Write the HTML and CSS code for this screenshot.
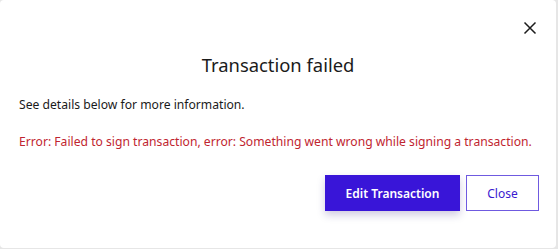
FILE: index.html
```html
<!DOCTYPE html>
<html>
<head>
<meta charset="utf-8">
<link rel="stylesheet" href="styles.css">
</head>
<body>
<div class="modal">
  <div class="top">
    <button class="close-x" aria-label="Close">
      <svg width="14" height="14" viewBox="0 0 14 14"><path d="M1.5 1.5 L12.5 12.5 M12.5 1.5 L1.5 12.5" stroke="#1c1c1c" stroke-width="1.5" fill="none"/></svg>
    </button>
  </div>
  <h1 class="title">Transaction failed</h1>
  <p class="info">See details below for more information.</p>
  <p class="error">Error: Failed to sign transaction, error: Something went wrong while signing a transaction.</p>
  <div class="actions">
    <button class="btn primary">Edit Transaction</button>
    <button class="btn secondary">Close</button>
  </div>
</div>
</body>
</html>
```
FILE: styles.css
```css
html, body {
  margin: 0;
  padding: 0;
  background: #e6e6e6;
}
body {
  font-family: "Noto Sans", "Open Sans", sans-serif;
  width: 558px;
  height: 249px;
}
.modal {
  width: 556px;
  height: 248px;
  background: #fff;
  border-radius: 4px;
  display: flex;
  flex-direction: column;
  box-sizing: border-box;
}
.top {
  display: flex;
  justify-content: flex-end;
  padding: 21px 19px 0 0;
  height: 14px;
}
.close-x {
  border: 0;
  background: none;
  padding: 0;
  width: 14px;
  height: 14px;
  display: block;
}
.close-x svg { display: block; }
.title {
  margin: 17px 0 0 0;
  text-align: center;
  font-size: 18.4px;
  font-weight: 400;
  line-height: 26px;
  color: #1b1b1b;
}
.info {
  margin: 18px 0 0 19px;
  font-size: 12.15px;
  line-height: 18px;
  color: #1a1a1a;
}
.error {
  margin: 19px 0 0 19px;
  font-size: 12.15px;
  line-height: 18px;
  color: #bf2530;
}
.actions {
  display: flex;
  justify-content: flex-end;
  gap: 6px;
  padding: 24px 17px 0 0;
}
.btn {
  height: 36px;
  font-family: inherit;
  font-size: 12px;
  box-sizing: border-box;
  cursor: pointer;
  padding: 0;
}
.primary {
  width: 135px;
  background: #3915d8;
  color: #fff;
  border: 0;
  font-weight: 600;
  box-shadow: 0 4px 8px rgba(40, 20, 120, 0.22);
}
.secondary {
  width: 73px;
  background: #fff;
  color: #3a1ad0;
  border: 1.5px solid #6f5ae0;
}
```
